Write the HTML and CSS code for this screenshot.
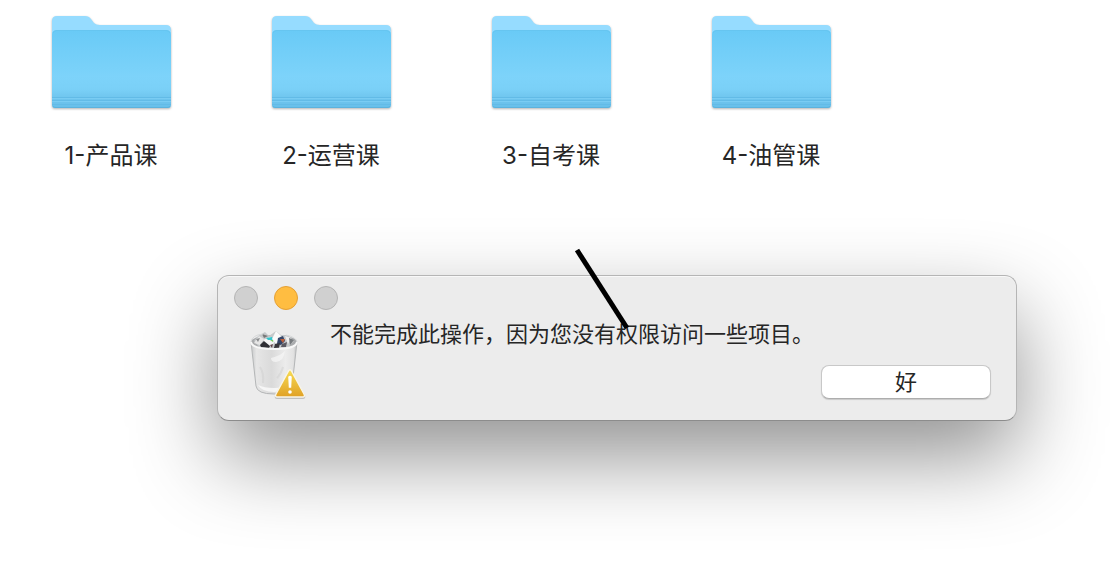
FILE: index.html
```html
<!DOCTYPE html>
<html lang="zh-CN">
<head>
    <meta charset="UTF-8">
    <title>课程</title>
    <meta name="viewport" content="width=device-width, initial-scale=1.0">
    <link rel="stylesheet" href="styles.css">
</head>
<body>
    <!-- Shared folder artwork -->
    <svg class="defs" width="0" height="0" aria-hidden="true">
        <defs>
            <linearGradient id="folderFront" x1="0" y1="0" x2="0" y2="1">
                <stop offset="0" stop-color="#69caf6"/>
                <stop offset="0.6" stop-color="#7dd3fa"/>
                <stop offset="0.76" stop-color="#7ad0f7"/>
                <stop offset="0.87" stop-color="#6fc5ee"/>
                <stop offset="1" stop-color="#67bfea"/>
            </linearGradient>
            <symbol id="folder" viewBox="0 0 120 96">
                <path d="M1 7Q1 2 6 2H34Q38 2 40 5L43 9Q45 11 49 11H115Q120 11 120 16V80H1Z" fill="#96dcff"/>
                <path d="M1 21Q1 16 6 16H115Q120 16 120 21V91Q120 94 117 94H4Q1 94 1 91Z" fill="url(#folderFront)"/>
                <path d="M2 19Q3 16.500 6 16.500H115Q118 16.500 119 19" fill="none" stroke="#66c5f0"/>
                <path d="M1 83.500H120M1 86.500H120M1 90.500H120" stroke="#62bbe7" stroke-width="1"/>
                <path d="M1 84.500H120M1 87.500H120" stroke="#79ccf3" stroke-width="1"/>
                <path d="M2 92.500Q3 93.500 5 93.500H116Q118 93.500 119 92.500" fill="none" stroke="#5bb2dd"/>
            </symbol>
        </defs>
    </svg>

    <ul class="folders">
        <li class="folder">
            <svg class="folder-icon" aria-hidden="true"><use href="#folder"/></svg>
            <span class="folder-name">1-产品课</span>
        </li>
        <li class="folder">
            <svg class="folder-icon" aria-hidden="true"><use href="#folder"/></svg>
            <span class="folder-name">2-运营课</span>
        </li>
        <li class="folder">
            <svg class="folder-icon" aria-hidden="true"><use href="#folder"/></svg>
            <span class="folder-name">3-自考课</span>
        </li>
        <li class="folder">
            <svg class="folder-icon" aria-hidden="true"><use href="#folder"/></svg>
            <span class="folder-name">4-油管课</span>
        </li>
    </ul>

    <div class="dialog" role="alertdialog" aria-labelledby="message">
        <div class="window-buttons">
            <button class="dot" type="button" aria-label="关闭" disabled></button>
            <button class="dot dot-minimize" type="button" aria-label="最小化"></button>
            <button class="dot" type="button" aria-label="缩放" disabled></button>
        </div>
        <div class="dialog-body">
            <svg class="trash-icon" viewBox="0 0 56 68" aria-hidden="true">
                <defs>
                    <linearGradient id="binSide" x1="0" x2="1">
                        <stop offset="0" stop-color="#c5c7c8"/>
                        <stop offset="0.12" stop-color="#e6e6e6"/>
                        <stop offset="0.45" stop-color="#dadada"/>
                        <stop offset="0.75" stop-color="#ececec"/>
                        <stop offset="0.92" stop-color="#e2e2e2"/>
                        <stop offset="1" stop-color="#bdbfc0"/>
                    </linearGradient>
                    <linearGradient id="warnFill" x1="0" y1="0" x2="0" y2="1">
                        <stop offset="0" stop-color="#f7dc54"/>
                        <stop offset="1" stop-color="#e0a126"/>
                    </linearGradient>
                </defs>
                <path d="M1 11L6 55Q7 63 24 63Q40 63 42 55L47 11Z" fill="url(#binSide)" stroke="#b4b6b7"/>
                <path d="M8 54Q12 61 24 61Q36 61 40 54Q34 57 24 57Q14 57 8 54Z" fill="#fff" opacity="0.7"/>
                <path d="M21 27Q30 25 35 20Q34 30 26 31Q21 31 21 27Z" fill="#f7f7f7" opacity="0.7"/>
                <path d="M10 36Q14 42 13 52M33 36Q31 43 27 47" fill="none" stroke="#cfcfcf" stroke-width="2" opacity="0.5"/>
                <ellipse cx="24" cy="11" rx="23" ry="7" fill="#a9abad"/>
                <!-- Crumpled paper -->
                <path d="M4 10L8 5L15 1L19 5L26 0L31 4L38 4L44 10L38 16L24 18L9 16Z" fill="#c5c8ca"/>
                <path d="M4 12L9 5L14 8L10 14Z" fill="#e6e6e6"/>
                <path d="M12 3L18 5L14 7Z" fill="#777"/>
                <path d="M6 8L10 7L8 11Z" fill="#8a8c8e"/>
                <path d="M10 14L14 10L20 15L19 17L11 16Z" fill="#302f35"/>
                <path d="M13 9L20 6L25 9L22 16L18 13Z" fill="#f5f5f5"/>
                <path d="M16 7L22 6L24 9L18 9Z" fill="#35c5cc"/>
                <path d="M20 9L24 9L23 11Z" fill="#79c95e"/>
                <path d="M20 14L23 13L22 17Z" fill="#5d4145"/>
                <path d="M26 0L31 5L26 13L22 8Z" fill="#fafafa"/>
                <path d="M28 7L33 5L35 10L31 14L27 13Z" fill="#344568"/>
                <path d="M30 8L35 8L33 12Z" fill="#bd603b"/>
                <path d="M25 13L30 12L29 17L24 17Z" fill="#39363a"/>
                <path d="M32 13L37 11L36 16L31 16Z" fill="#5c5b64"/>
                <path d="M35 5L41 7L38 13Z" fill="#efefef"/>
                <path d="M39 7L44 9L40 14Z" fill="#777b7e"/>
                <path d="M1 11Q2 18 24 18Q46 18 47 11" fill="none" stroke="#f8f8f8" stroke-width="2"/>
                <path d="M1 11Q2 4 13 3M36 4Q46 6 47 11" fill="none" stroke="#d7d9da" stroke-width="1"/>
                <!-- Warning badge -->
                <path d="M38.500 40.500Q40 38 41.500 40.500L55 64Q56 68 53 68H27Q24 68 25 64Z" fill="#808080" opacity="0.4"/>
                <path d="M38.500 40Q40 37.500 41.500 40L54 63Q55.500 66 52.500 66H27.500Q24.500 66 26 63Z" fill="url(#warnFill)" stroke="#f8f5e9" stroke-width="1.500"/>
                <path d="M39 46Q40 45 41 46L40.500 56H39.500Z" fill="#fff" stroke="#fff" stroke-width="1.500"/>
                <circle cx="40" cy="61" r="1.800" fill="#fff"/>
            </svg>
            <div class="dialog-content">
                <p class="message" id="message">不能完成此操作，因为您没有权限访问一些项目。</p>
                <button class="ok-btn" type="button">好</button>
            </div>
        </div>
        <svg class="pen-mark" viewBox="0 0 60 86" aria-hidden="true">
            <path d="M5 4L55 82" stroke="#000" stroke-width="5"/>
        </svg>
    </div>
</body>
</html>
```

FILE: styles.css
```css
* {
    box-sizing: border-box;
}
body {
    margin: 0;
    min-height: 100vh;
    background: #fff;
    color: #262626;
    font-family: Inter, "Noto Sans CJK SC", sans-serif;
    overflow-x: hidden;
}
.defs {
    display: block;
}
.folders {
    display: grid;
    grid-template-columns: repeat(auto-fill, 220px);
    margin: 0;
    padding: 14px 0 0 1px;
    list-style: none;
}
.folder {
    display: flex;
    flex-direction: column;
    align-items: center;
    gap: 28px;
}
.folder-icon {
    width: 120px;
    height: 96px;
    filter: drop-shadow(0 1px 1px rgba(0, 0, 0, 0.3));
}
.folder-name {
    font-size: 24px;
    line-height: 36px;
}
.dialog {
    position: relative;
    margin: 101px 99px 0 217px;
    padding: 10px 25px 21px 16px;
    border: 1px solid #b5b5b5;
    border-bottom-color: #8c8c8c;
    border-radius: 12px;
    background: #ececec;
    box-shadow: inset 0 1px 0 #f8f8f8, 0 36px 84px rgba(0, 0, 0, 0.43);
}
.window-buttons {
    display: flex;
    gap: 16px;
}
.dot {
    width: 24px;
    height: 24px;
    padding: 0;
    border: 1px solid #b5b5b5;
    border-radius: 50%;
    background: #d0d0d0;
}
.dot-minimize {
    border-color: #e5a035;
    background: #ffbd41;
}
.dialog-body {
    display: flex;
    gap: 24px;
    padding: 9px 0 0 16px;
}
.trash-icon {
    flex: none;
    width: 56px;
    height: 68px;
    margin-top: 12px;
}
.dialog-content {
    display: flex;
    flex: 1;
    flex-direction: column;
    gap: 16px;
}
.message {
    margin: 0;
    font-size: 22px;
    line-height: 30px;
}
.ok-btn {
    align-self: flex-end;
    width: 170px;
    height: 34px;
    padding: 0;
    border: 1px solid #c8c8c8;
    border-bottom-color: #adadad;
    border-radius: 8px;
    background: #fff;
    color: #262626;
    font-family: inherit;
    font-size: 22px;
    line-height: 30px;
    box-shadow: 0 1px 1px rgba(0, 0, 0, 0.15);
}
/* Stroke drawn over the window */
.pen-mark {
    position: absolute;
    top: -30px;
    left: 354px;
    width: 60px;
    height: 86px;
    pointer-events: none;
}
```
